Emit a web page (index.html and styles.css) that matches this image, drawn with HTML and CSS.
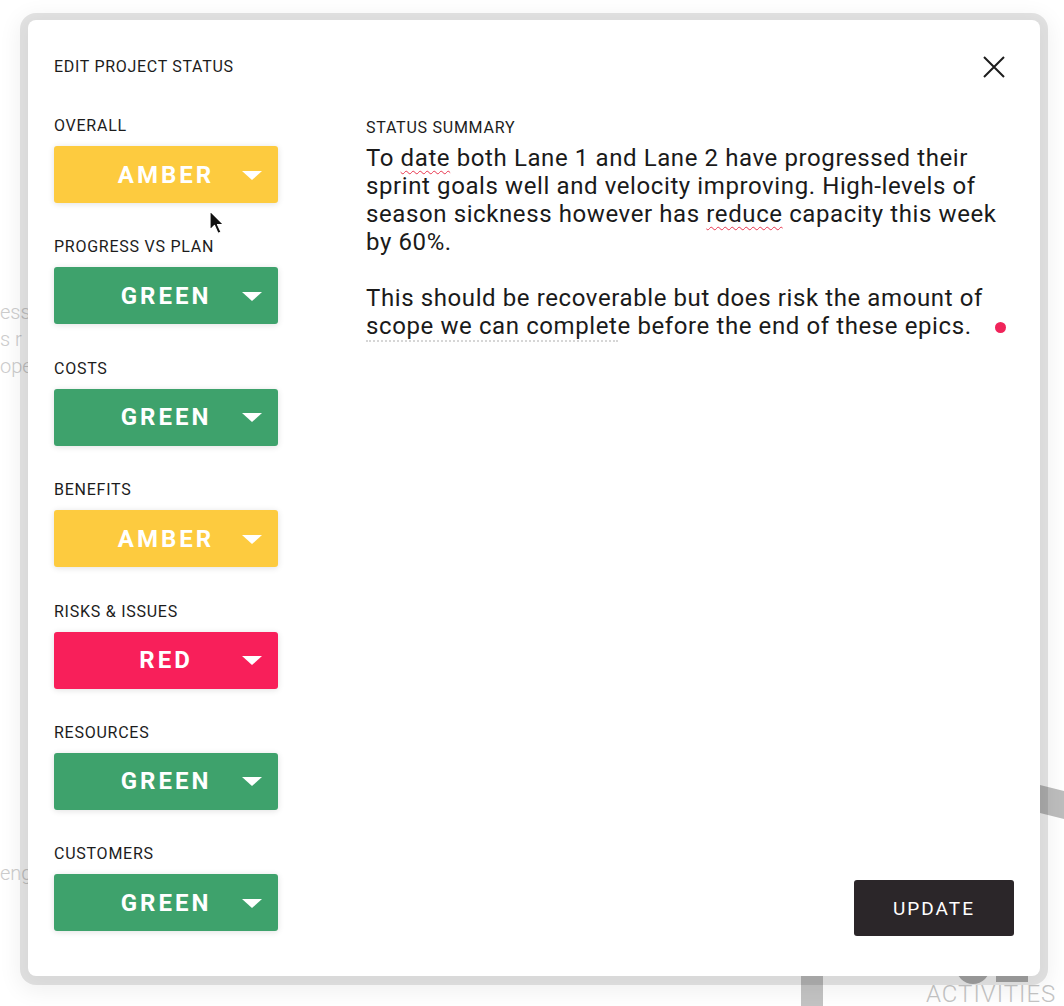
FILE: index.html
```html
<!DOCTYPE html>
<html lang="en">
<head>
<meta charset="utf-8">
<title>Edit Project Status</title>
<link rel="stylesheet" href="styles.css">
</head>
<body>
<div class="backdrop">
  <div class="bg-text bg-l1">ess</div>
  <div class="bg-text bg-l2">s r</div>
  <div class="bg-text bg-l3">ope</div>
  <div class="bg-text bg-l4">eng</div>
  <div class="bg-bar"></div>
  <div class="bg-block"></div>
  <div class="bg-disc"></div>
  <div class="bg-rect"></div>
  <div class="bg-text bg-act">ACTIVITIES</div>
</div>

<div class="modal">
  <div class="modal-head">
    <h1 class="title">EDIT PROJECT STATUS</h1>
    <button class="close" aria-label="Close">
      <svg width="22" height="22" viewBox="0 0 22 22"><path d="M1 1 L21 21 M21 1 L1 21" stroke="#1d1d1d" stroke-width="2" fill="none"/></svg>
    </button>
  </div>

  <div class="modal-body">
    <div class="fields">
      <div class="field">
        <div class="label">OVERALL</div>
        <div class="select amber"><span class="value">AMBER</span><span class="caret"></span></div>
      </div>
      <div class="field">
        <div class="label">PROGRESS VS PLAN</div>
        <div class="select green"><span class="value">GREEN</span><span class="caret"></span></div>
      </div>
      <div class="field">
        <div class="label">COSTS</div>
        <div class="select green"><span class="value">GREEN</span><span class="caret"></span></div>
      </div>
      <div class="field">
        <div class="label">BENEFITS</div>
        <div class="select amber"><span class="value">AMBER</span><span class="caret"></span></div>
      </div>
      <div class="field">
        <div class="label">RISKS &amp; ISSUES</div>
        <div class="select red"><span class="value">RED</span><span class="caret"></span></div>
      </div>
      <div class="field">
        <div class="label">RESOURCES</div>
        <div class="select green"><span class="value">GREEN</span><span class="caret"></span></div>
      </div>
      <div class="field">
        <div class="label">CUSTOMERS</div>
        <div class="select green"><span class="value">GREEN</span><span class="caret"></span></div>
      </div>
    </div>

    <div class="summary">
      <div class="label summary-label">STATUS SUMMARY</div>
      <div class="summary-text">
        <p>To <span class="typo">date</span> both Lane 1 and Lane 2 have progressed their<br>sprint goals well and velocity improving. High-levels of<br>season sickness however has <span class="typo">reduce</span> capacity this week<br>by 60%.</p>
        <p>This should be recoverable but does risk the amount of<br><span class="hint">scope we can complet</span>e before the end of these epics.</p>
        <span class="dot"></span>
      </div>
      <button class="update">UPDATE</button>
    </div>
  </div>

  <svg class="cursor" width="16" height="26" viewBox="0 0 16 26"><path d="M1 1 L1 20 L5.5 15.5 L9 23.5 L12 22 L8.5 14.5 L14.5 14.5 Z" fill="#111" stroke="#fff" stroke-width="1.2" stroke-linejoin="round"/></svg>
</div>
</body>
</html>
```

FILE: styles.css
```css
html, body {
  margin: 0;
  padding: 0;
}
body {
  width: 1064px;
  height: 1006px;
  background: #ffffff;
  font-family: Roboto, "Liberation Sans", sans-serif;
  color: #1c1c1c;
  position: relative;
  overflow: hidden;
}

/* faint page content behind the overlay */
.backdrop {
  position: absolute;
  inset: 0;
  z-index: 0;
}
.bg-text {
  position: absolute;
  color: #cccccc;
  font-size: 20px;
  font-weight: 300;
  white-space: nowrap;
}
.bg-l1 { left: 0; top: 300px; }
.bg-l2 { left: 0; top: 327px; }
.bg-l3 { left: 0; top: 354px; }
.bg-l4 { left: 0; top: 861px; }
.bg-act {
  left: 926px;
  top: 982px;
  font-size: 24px;
  line-height: 24px;
  letter-spacing: 1px;
  color: #c4c4c4;
}
.bg-bar {
  position: absolute;
  left: 1030px;
  top: 790px;
  width: 60px;
  height: 28px;
  background: #bdbdbd;
  transform: skewY(14deg);
}
.bg-block {
  position: absolute;
  left: 801px;
  top: 972px;
  width: 22px;
  height: 40px;
  background: #c3c3c3;
}
.bg-disc {
  position: absolute;
  left: 956px;
  top: 950px;
  width: 34px;
  height: 34px;
  border-radius: 50%;
  background: #b0b0b0;
}
.bg-rect {
  position: absolute;
  left: 996px;
  top: 970px;
  width: 32px;
  height: 12px;
  background: #b0b0b0;
}

/* modal */
.modal {
  position: relative;
  z-index: 1;
  box-sizing: border-box;
  margin: 20px 0 0 28px;
  width: 1012px;
  height: 956px;
  background: #fff;
  border-radius: 8px;
  box-shadow: 0 1px 0 8px rgba(0, 0, 0, 0.1), 0 6px 22px 10px rgba(0, 0, 0, 0.06);
  padding: 37px 26px 40px 26px;
  display: flex;
  flex-direction: column;
}
.modal-head {
  display: flex;
  justify-content: space-between;
  align-items: center;
  height: 20px;
}
.title {
  margin: 0;
  font-size: 16px;
  font-weight: 400;
  line-height: 20px;
  letter-spacing: 0.7px;
}
.close {
  border: 0;
  background: none;
  padding: 0;
  margin-right: 9px;
  width: 22px;
  height: 22px;
  display: flex;
}

.modal-body {
  flex: 1;
  margin-top: 39px;
  display: grid;
  grid-template-columns: 224px 1fr;
  column-gap: 88px;
}

.fields {
  display: flex;
  flex-direction: column;
  gap: 34.4px;
}
.label {
  font-size: 16px;
  line-height: 20px;
  letter-spacing: 0.75px;
  color: #1c1c1c;
}
.field .label {
  margin-bottom: 10px;
}
.select {
  height: 57px;
  border-radius: 3px;
  position: relative;
  display: flex;
  align-items: center;
  justify-content: center;
  color: #fff;
  box-shadow: 0 1px 6px rgba(0, 0, 0, 0.12);
}
.select .value {
  font-size: 24px;
  font-weight: 700;
  letter-spacing: 3px;
}
.caret {
  position: absolute;
  right: 16px;
  top: 50%;
  margin-top: -4px;
  width: 0;
  height: 0;
  border-left: 10px solid transparent;
  border-right: 10px solid transparent;
  border-top: 9px solid #fff;
}
.amber { background: #fdcb3f; }
.green { background: #3ea26c; }
.red { background: #f81f5a; }

.summary {
  display: flex;
  flex-direction: column;
  padding-top: 2px;
}
.summary-label {
  margin-bottom: 6px;
}
.summary-text {
  flex: 1;
  position: relative;
  font-size: 24px;
  line-height: 28px;
  letter-spacing: 0.6px;
  color: #1a1a1a;
}
.summary-text p {
  margin: 0 0 28px 0;
  white-space: nowrap;
}
.typo {
  text-decoration: underline wavy #e8344d;
  text-decoration-thickness: 1px;
  text-underline-offset: 4px;
}
.hint {
  border-bottom: 2px dotted #d6d6d6;
}
.dot {
  position: absolute;
  left: 629px;
  top: 178px;
  width: 11px;
  height: 11px;
  border-radius: 50%;
  background: #f0245a;
}
.update {
  align-self: flex-end;
  width: 160px;
  height: 56px;
  border: 0;
  border-radius: 3px;
  background: #2b2629;
  color: #fff;
  font-family: Roboto, "Liberation Sans", sans-serif;
  font-size: 19px;
  letter-spacing: 2px;
  padding: 0;
}
.cursor {
  position: absolute;
  left: 181px;
  top: 190px;
}
```
